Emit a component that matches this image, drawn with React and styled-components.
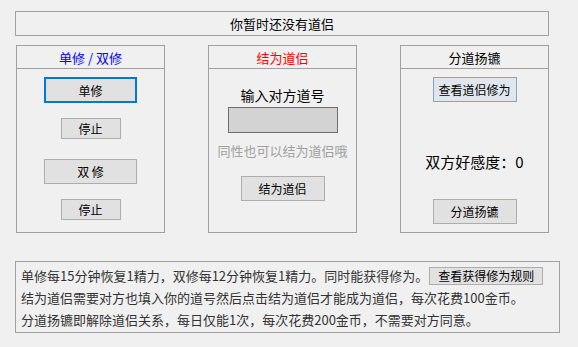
import React from 'react';
import styled, { createGlobalStyle } from 'styled-components';

const GlobalStyle = createGlobalStyle`
    body {
        margin: 0;
        background: #f0f0f0;
        font-family: "Noto Sans CJK SC", "Microsoft YaHei", sans-serif;
        color: #000;
    }
`;

const Page = styled.div`
    width: 578px;
    height: 347px;
    box-sizing: border-box;
    padding: 11px 0 0 15px;
`;

const TitleBar = styled.div`
    width: 534px;
    height: 25px;
    box-sizing: border-box;
    border: 1px solid #a0a0a0;
    display: flex;
    align-items: center;
    justify-content: center;
    font-size: 13px;
`;

const PanelRow = styled.div`
    display: flex;
    gap: 43px;
    margin: 9px 0 0 1px;
`;

const Panel = styled.section`
    width: 149px;
    height: 188px;
    box-sizing: border-box;
    border: 1px solid #a0a0a0;
    display: flex;
    flex-direction: column;
`;

const PanelHeader = styled.header`
    height: 23px;
    box-sizing: border-box;
    border-bottom: 1px solid #a0a0a0;
    display: flex;
    align-items: center;
    justify-content: center;
    font-size: 13px;
    color: ${p => p.$color || '#000'};
`;

const PanelBody = styled.div`
    display: flex;
    flex-direction: column;
    align-items: center;
`;

const Button = styled.button`
    width: ${p => p.$w}px;
    height: ${p => p.$h}px;
    margin-top: ${p => p.$mt || 0}px;
    box-sizing: border-box;
    padding: 0;
    border: 1px solid #adadad;
    background: #e1e1e1;
    font-family: inherit;
    font-size: 12px;
    color: #000;
    display: flex;
    align-items: center;
    justify-content: center;
    &.focused {
        border: 2px solid #0078d7;
    }
    &.hovered {
        border-color: #86a5c4;
        background: #dfe6ee;
    }
`;

const Label = styled.div`
    margin-top: ${p => p.$mt || 0}px;
    line-height: ${p => p.$lh || 18}px;
    font-size: ${p => p.$size || 13}px;
    color: ${p => p.$color || '#000'};
    white-space: nowrap;
`;

const Input = styled.input`
    width: 110px;
    height: 26px;
    margin-top: 3px;
    box-sizing: border-box;
    border: 1px solid #6e6e6e;
    background: #d3d3d3;
    outline: none;
`;

const InfoBox = styled.div`
    width: 545px;
    height: 72px;
    margin-top: 28px;
    box-sizing: border-box;
    border: 1px solid #a0a0a0;
    padding: 3px 5px;
    font-size: 13px;
    line-height: 22px;
    color: #333;
`;

const InfoLine = styled.div`
    white-space: nowrap;
    display: flex;
    align-items: center;
`;

const RuleButton = styled.button`
    width: 114px;
    height: 18px;
    box-sizing: border-box;
    padding: 0;
    margin-left: 1px;
    border: 1px solid #adadad;
    background: #e1e1e1;
    font-family: inherit;
    font-size: 12px;
    line-height: 16px;
    color: #000;
`;

export default function App() {
    return (
        <Page>
            <GlobalStyle />
            <TitleBar>你暂时还没有道侣</TitleBar>
            <PanelRow>
                <Panel>
                    <PanelHeader $color="#0000ff">单修 / 双修</PanelHeader>
                    <PanelBody>
                        <Button className="focused" $w={93} $h={26} $mt={8}>单修</Button>
                        <Button $w={60} $h={21} $mt={15}>停止</Button>
                        <Button $w={93} $h={25} $mt={20}>双 修</Button>
                        <Button $w={60} $h={21} $mt={15}>停止</Button>
                    </PanelBody>
                </Panel>
                <Panel>
                    <PanelHeader $color="#ff0000">结为道侣</PanelHeader>
                    <PanelBody>
                        <Label $mt={17} $size={14}>输入对方道号</Label>
                        <Input />
                        <Label $mt={9} $color="#a0a0a0">同性也可以结为道侣哦</Label>
                        <Button $w={84} $h={25} $mt={16}>结为道侣</Button>
                    </PanelBody>
                </Panel>
                <Panel>
                    <PanelHeader>分道扬镳</PanelHeader>
                    <PanelBody>
                        <Button className="hovered" $w={84} $h={25} $mt={8}>查看道侣修为</Button>
                        <Label $mt={50} $lh={20} $size={15}>双方好感度：0</Label>
                        <Button $w={84} $h={25} $mt={27}>分道扬镳</Button>
                    </PanelBody>
                </Panel>
            </PanelRow>
            <InfoBox>
                <InfoLine>
                    单修每15分钟恢复1精力，双修每12分钟恢复1精力。同时能获得修为。
                    <RuleButton>查看获得修为规则</RuleButton>
                </InfoLine>
                <InfoLine>结为道侣需要对方也填入你的道号然后点击结为道侣才能成为道侣，每次花费100金币。</InfoLine>
                <InfoLine>分道扬镳即解除道侣关系，每日仅能1次，每次花费200金币，不需要对方同意。</InfoLine>
            </InfoBox>
        </Page>
    );
}
